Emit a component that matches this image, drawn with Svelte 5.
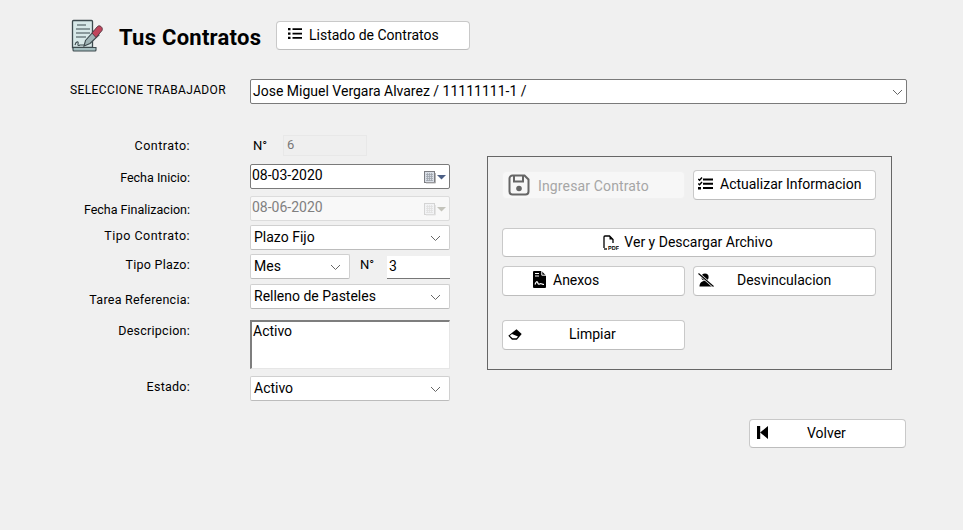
<script>
  const chev = "M1 1l4.500 4.500L10 1";
</script>

{#snippet chevron()}
  <svg class="chev" width="11" height="7" viewBox="0 0 11 7"><path d={chev} fill="none" stroke="#666" stroke-width="1"/></svg>
{/snippet}

{#snippet calendar(off)}
  <svg class="cal" class:off width="27" height="14" viewBox="0 0 27 14">
    <rect x="2.500" y="1.500" width="10" height="11" fill={off ? '#f2f3f5' : '#d9dee6'} stroke={off ? '#d4d4d4' : '#7c7d82'}/>
    <path d="M4 4.500h7M4 6.500h7M4 8.500h7M4 10.500h7M5.500 3v8M7.500 3v8M9.500 3v8" stroke={off ? '#e0e0e0' : '#9ea4ac'} stroke-width=".8"/>
    <path d="M13.500 3v10H4" fill="none" stroke={off ? '#e4e4e4' : '#b5b5b5'}/>
    <path d="M15 5h9l-4.500 4.500z" fill={off ? '#c4c4bc' : '#4c5f85'}/>
  </svg>
{/snippet}

<div class="page">
  <header class="head">
    <svg class="logo" width="34" height="34" viewBox="0 0 34 34">
      <path d="M2.500 2.500a1 1 0 0 1 1-1h18a1 1 0 0 1 1 1v26h-20z" fill="#d7e8e8" stroke="#3d4a4e" stroke-width="1.300"/>
      <path d="M7 6h9M6 10h14M6 14h14M6 18h10" stroke="#3d4a4e" stroke-width="1.200"/>
      <path d="M5 26c1-4 4-4 3-1-.5 2 1 1.500 2 1h4" fill="none" stroke="#3d4a4e" stroke-width="1.100"/>
      <path d="M3 28.500h23v2.500a1 1 0 0 1-1 1H4a1 1 0 0 1-1-1z" fill="#a5bec0" stroke="#3d4a4e" stroke-width="1.100"/>
      <path d="M14 27l1.500-5.500L24 12l5 4-9 8.500z" fill="#9fb4b6" stroke="#3d4a4e" stroke-width="1.100"/>
      <path d="M22 14l5.500-6.500c2-2 6 1 4.500 4L26 18.500z" fill="#c0455c" stroke="#5b3a45" stroke-width="1"/>
    </svg>
    <h1>Tus Contratos</h1>
    <div class="btn list-btn">
      <svg width="14" height="13" viewBox="0 0 14 13"><path d="M0 1h2.500v2.300H0zM0 5.400h2.500v2.300H0zM0 9.800h2.500v2.300H0zM4.500 1.300H14v1.700H4.500zM4.500 5.700H14v1.700H4.500zM4.500 10.100H14v1.700H4.500z"/></svg>
      <span>Listado de Contratos</span>
    </div>
  </header>

  <div class="worker">
    <span class="worker-label">SELECCIONE TRABAJADOR</span>
    <div class="combo worker-combo"><span>Jose Miguel Vergara Alvarez / 11111111-1 /</span>{@render chevron()}</div>
  </div>

  <div class="main">
    <div class="form">
      <div class="row r-contrato">
        <span class="label loose">Contrato:</span>
        <div class="ctl">
          <span class="num">N°</span>
          <div class="readonly">6</div>
        </div>
      </div>
      <div class="row r-inicio">
        <span class="label snug down1">Fecha Inicio:</span>
        <div class="ctl date active"><span>08-03-2020</span>{@render calendar(false)}</div>
      </div>
      <div class="row r-fin">
        <span class="label snug down1">Fecha Finalizacion:</span>
        <div class="ctl date disabled"><span>08-06-2020</span>{@render calendar(true)}</div>
      </div>
      <div class="row r-tipo">
        <span class="label wider up2">Tipo Contrato:</span>
        <div class="ctl combo"><span>Plazo Fijo</span>{@render chevron()}</div>
      </div>
      <div class="row r-plazo">
        <span class="label up2">Tipo Plazo:</span>
        <div class="ctl plazo">
          <div class="combo mes"><span>Mes</span>{@render chevron()}</div>
          <span class="plazo-n">N°</span>
          <div class="line-input">3</div>
        </div>
      </div>
      <div class="row r-tarea">
        <span class="label down3">Tarea Referencia:</span>
        <div class="ctl combo"><span>Relleno de Pasteles</span>{@render chevron()}</div>
      </div>
      <div class="row r-desc">
        <span class="label">Descripcion:</span>
        <div class="ctl area">Activo</div>
      </div>
      <div class="row r-estado">
        <span class="label up2">Estado:</span>
        <div class="ctl combo"><span>Activo</span>{@render chevron()}</div>
      </div>
    </div>

    <section class="panel">
      <div class="btn ingresar">
        <svg width="22" height="22" viewBox="0 0 22 22"><path d="M1.500 4.500a3 3 0 0 1 3-3h12l4 4v12a3 3 0 0 1-3 3h-13a3 3 0 0 1-3-3z" fill="none" stroke="#666" stroke-width="2"/><path d="M6 2v5.500h9V2" fill="none" stroke="#666" stroke-width="2"/><circle cx="11" cy="14.500" r="2.800" fill="#666"/></svg>
        <span>Ingresar Contrato</span>
      </div>
      <div class="btn actualizar">
        <svg width="15" height="13" viewBox="0 0 15 13"><path d="M.3 2l1.300 1.300L4 .5M.3 6.500l1.300 1.300L4 5" fill="none" stroke="#000" stroke-width="1.400"/><path d="M0 10h3v2.500H0zM5 1.500h10v2H5zM5 5.700h10v2H5zM5 10h10v2H5z"/></svg>
        <span>Actualizar Informacion</span>
      </div>
      <div class="btn ver">
        <svg width="16" height="15" viewBox="0 0 16 15"><path d="M1 13V2a1 1 0 0 1 1-1h4.500L10 4.500V8" fill="none" stroke="#000" stroke-width="1.300"/><path d="M6.500 1v3.500H10z"/><path d="M1 14h3" stroke="#000" stroke-width="1.300"/><text x="5" y="14.800" class="pdf">PDF</text></svg>
        <span>Ver y Descargar Archivo</span>
      </div>
      <div class="btn anexos">
        <svg width="13" height="17" viewBox="0 0 13 17"><path d="M1 0h7.500L13 4.500V16a1 1 0 0 1-1 1H1a1 1 0 0 1-1-1V1a1 1 0 0 1 1-1z"/><path d="M8.800 0v4.200H13" fill="none" stroke="#fff" stroke-width="1"/><path d="M2 2.500h4M2 5h4" stroke="#fff" stroke-width="1.100"/><path d="M2 13.500c1.200-3.500 2.200-3.500 2.800-1.500s1.500 1 2.500.7 2.200.8 3.700.8" fill="none" stroke="#fff" stroke-width="1.200"/></svg>
        <span>Anexos</span>
      </div>
      <div class="btn desv">
        <svg width="16" height="14" viewBox="0 0 16 14"><circle cx="7" cy="4" r="3.600"/><path d="M1.500 13.500c0-4 2.500-5.500 5.500-5.500 2.500 0 4 1 5 2l2.500 3.500z"/><path d="M.5.500l15 13" stroke="#fff" stroke-width="2.600"/><path d="M.5.500l15 13" stroke="#000" stroke-width="1.100"/></svg>
        <span>Desvinculacion</span>
      </div>
      <div class="btn limpiar">
        <svg width="14" height="11" viewBox="0 0 14 11"><path d="M8.500.3l5.200 4.700-4.800 5.700H4L.3 6.700z" fill="#000"/><path d="M4 5l-2.200 1.800 2.800 2.500h3.800L10 7.500z" fill="#fff"/></svg>
        <span>Limpiar</span>
      </div>
    </section>
  </div>

  <div class="foot">
    <div class="btn volver">
      <svg width="11" height="13" viewBox="0 0 11 13"><path d="M0 0h3.200v13H0zM11 0v13L3.200 6.500z"/></svg>
      <span>Volver</span>
    </div>
  </div>
</div>

<style>
  :global(body) { margin: 0; background: #f0f0f0; }
  .page {
    box-sizing: border-box; width: 963px; height: 530px; overflow: hidden;
    background: #f0f0f0; color: #000;
    font-family: Roboto, "Liberation Sans", sans-serif; font-size: 14px;
  }
  .head { display: flex; align-items: center; height: 29px; padding: 21px 0 0 70px; }
  .logo { flex: none; }
  h1 { margin: 0 15px 0 15px; font-size: 22px; font-weight: 700; line-height: 30px; width: 142px; white-space: nowrap; position: relative; top: 2px; letter-spacing: .012em; }
  .btn {
    box-sizing: border-box; display: flex; align-items: center;
    background: #fff; border: 1px solid #c9c9c9; border-radius: 4px;
    white-space: nowrap; border-bottom-color: #bdbdbd;
  }
  .list-btn { width: 194px; height: 29px; padding-left: 11px; gap: 7px; }
  .list-btn span { position: relative; top: -1px; }
  .list-btn svg { margin-top: -4px; }

  .worker { display: flex; align-items: center; height: 25px; margin-top: 29px; padding-left: 70px; }
  .worker-label { width: 180px; font-size: 12px; position: relative; top: -2px; letter-spacing: .38px; white-space: nowrap; }
  .combo {
    box-sizing: border-box; display: flex; align-items: center; justify-content: space-between;
    background: #fff; border: 1px solid #d0d0d0; border-bottom-color: #bcbcbc; border-radius: 2px; padding: 0 8px 0 3px; height: 25px;
  }
  .combo span { position: relative; top: -1px; }
  .worker-combo { width: 657px; border-color: #7a7a7a; padding-left: 2px; padding-right: 3px; }
  .chev { flex: none; margin-top: 2px; }

  .main { display: flex; align-items: flex-start; margin-top: 31px; padding-left: 70px; }
  .form { width: 380px; flex: none; }
  .row { display: flex; align-items: center; width: 380px; }
  .label { box-sizing: border-box; width: 120px; margin-right: 60px; text-align: right; font-size: 12.500px; letter-spacing: .02em; white-space: nowrap; position: relative; }
  .snug { letter-spacing: 0; }
  .loose { letter-spacing: .47px; }
  .wider { letter-spacing: .48px; }
  .down1 { top: 1px; }
  .down3 { top: 3px; }
  .up2 { top: -2px; }
  .ctl { box-sizing: border-box; width: 200px; }

  .r-contrato { height: 21px; }
  .r-contrato .ctl { display: flex; align-items: center; }
  .num { width: 33px; padding-left: 3px; box-sizing: border-box; font-size: 13px; }
  .readonly { box-sizing: border-box; width: 84px; height: 21px; border: 1px solid #e8e8e8; background: #efefef; color: #777; line-height: 18px; font-size: 13px; padding-left: 3px; }

  .r-inicio { height: 25px; margin-top: 8px; }
  .r-fin { height: 25px; margin-top: 7px; }
  .r-tipo { height: 25px; margin-top: 4px; }
  .r-plazo { height: 25px; margin-top: 4px; }
  .r-tarea { height: 25px; margin-top: 5px; }
  .r-desc { height: 49px; margin-top: 11px; align-items: flex-start; }
  .r-estado { height: 25px; margin-top: 7px; }
  .r-desc .label { padding-top: 3px; }

  .date { display: flex; align-items: center; justify-content: space-between; height: 25px; border-radius: 2px; padding-left: 1px; }
  .date span { position: relative; top: -2px; }
  .active { background: #fff; border: 1px solid #7a7a7a; }
  .disabled { background: #f8f8f8; border: 1px solid #dcdcdc; color: #808080; }
  .cal { flex: none; }

  .plazo { display: flex; align-items: flex-start; height: 25px; }
  .mes { width: 100px; }
  .plazo-n { width: 37px; padding-left: 10px; box-sizing: border-box; margin-top: 3px; font-size: 13px; }
  .line-input { box-sizing: border-box; width: 63px; height: 23px; margin-top: 2px; background: #fff; border-bottom: 1px solid #777; padding-left: 2px; line-height: 21px; }

  .area { height: 49px; background: #fff; border: 2px solid #7e7e7e; border-right: 1px solid #e6e6e6; border-bottom: 1px solid #e6e6e6; padding-left: 1px; line-height: 18px; }

  .panel {
    box-sizing: border-box; flex: none; width: 405px; height: 214px; margin: 21px 0 0 37px;
    border: 1px solid #666; padding: 13px 15px 0 14px;
    display: grid; grid-template-columns: 183px 183px; column-gap: 8px;
    grid-template-rows: 30px 29px 30px 30px;
    align-content: start;
  }
  .ingresar { grid-column: 1; grid-row: 1; height: 28px; margin-top: 1px; background: #f7f7f7; border-color: #f1f1f1; color: #a6a6a6; padding-left: 5px; gap: 8px; }
  .ingresar span { position: relative; top: 1px; letter-spacing: .01em; }
  .actualizar { grid-column: 2; grid-row: 1; padding-left: 4px; gap: 7px; }
  .actualizar span { position: relative; top: -1px; }
  .actualizar svg { margin-top: -3px; }
  .ver { grid-column: 1 / 3; grid-row: 2; margin-top: 28px; height: 29px; justify-content: center; gap: 5px; padding-right: 2px; }
  .ver span { position: relative; top: -1px; }
  .ver svg { margin-top: -1px; }
  .anexos { grid-column: 1; grid-row: 3; margin-top: 37px; height: 30px; padding-left: 30px; gap: 7px; }
  .anexos span, .desv span, .limpiar span { position: relative; top: -1px; }
  .anexos svg { margin-top: -3px; }
  .desv { grid-column: 2; grid-row: 3; margin-top: 37px; height: 30px; padding-left: 4px; }
  .desv svg { margin-top: -3px; }
  .desv span { margin-left: 23px; }
  .limpiar { grid-column: 1; grid-row: 4; margin-top: 61px; height: 30px; padding-left: 5px; }
  .limpiar span { margin-left: 47px; }
  .limpiar svg { margin-top: -1px; }
  .pdf { font-family: "Liberation Sans", sans-serif; font-size: 5.500px; font-weight: 700; }

  .foot { display: flex; justify-content: flex-end; padding-right: 57px; margin-top: 18px; }
  .volver { width: 157px; height: 29px; padding-left: 7px; }
  .volver span { margin-left: 39px; position: relative; top: -1px; }
  .volver svg { margin-top: -3px; }
</style>
